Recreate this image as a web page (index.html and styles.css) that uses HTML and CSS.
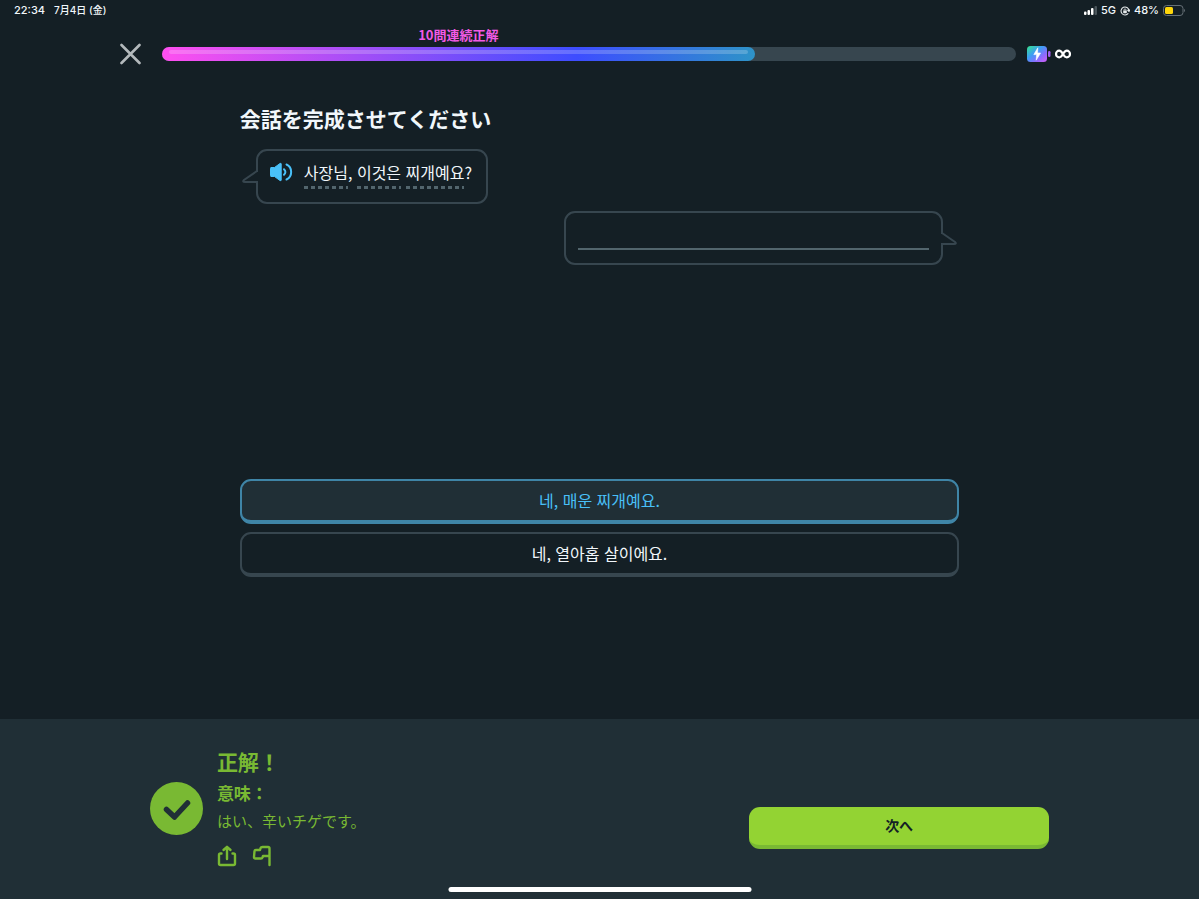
FILE: index.html
```html
<!DOCTYPE html>
<html lang="ja">
<head>
    <meta charset="UTF-8">
    <meta name="viewport" content="width=device-width, initial-scale=1.0">
    <title>会話を完成させてください</title>
    <link rel="stylesheet" href="styles.css">
</head>
<body>
    <div class="status-bar">
        <div class="status-left">
            <span>22:34</span>
            <span class="date">7月4日 (金)</span>
        </div>
        <div class="status-right">
            <svg width="13" height="9" viewBox="0 0 13 9">
                <rect x="0" y="5.500" width="2.500" height="3.500" rx="1" fill="#fff"/>
                <rect x="3.500" y="4" width="2.500" height="5" rx="1" fill="#fff"/>
                <rect x="7" y="2" width="2.500" height="7" rx="1" fill="#fff"/>
                <rect x="10.500" y="0" width="2.500" height="9" rx="1" fill="#4a555b"/>
            </svg>
            <span>5G</span>
            <svg width="10" height="10" viewBox="0 0 10 10" fill="none" stroke="#e6eaec">
                <path d="M8.300 7.300A4 4 0 1 1 9 4.400M7.400 4l1.600 1.300L10 3.600" stroke-width="1.100"/>
                <rect x="3.2" y="4.6" width="3.6" height="2.6" rx=".4" fill="#e6eaec" stroke="none"/>
                <path d="M4 4.800V3.900a1 1 0 0 1 2 0v.9" stroke-width=".8"/>
            </svg>
            <span>48%</span>
            <svg width="22" height="11" viewBox="0 0 22 11">
                <rect x=".5" y=".5" width="19.500" height="10" rx="3" fill="none" stroke="#667077"/>
                <rect x="2" y="2" width="8" height="7" rx="1.5" fill="#ffd60a"/>
                <path d="M21 4v3c1.200-.4 1.200-2.600 0-3z" fill="#667077"/>
            </svg>
        </div>
    </div>

    <header class="lesson-header">
        <button class="close" type="button" aria-label="閉じる">
            <svg width="22" height="22" viewBox="0 0 22 22">
                <path d="M1.500 2l18 18M19.500 2l-18 18" stroke="#b3b9bc" stroke-width="2.600" stroke-linecap="round"/>
            </svg>
        </button>
        <div class="progress">
            <div class="progress-fill">
                <span class="streak">10問連続正解</span>
            </div>
        </div>
        <div class="energy">
            <svg width="24" height="16" viewBox="0 0 24 16">
                <defs>
                    <linearGradient id="energy" x1="0" y1="0" x2="1" y2="1">
                        <stop offset="0" stop-color="#35e58a"/>
                        <stop offset=".4" stop-color="#3d9df5"/>
                        <stop offset=".7" stop-color="#8c6bff"/>
                        <stop offset="1" stop-color="#d45cf5"/>
                    </linearGradient>
                </defs>
                <rect x="0" y="0" width="20" height="16" rx="3.500" fill="url(#energy)"/>
                <rect x="21" y="5" width="2.500" height="6" rx="1.200" fill="#a45cf0"/>
                <path d="M10.800 1.800L6.800 8.600h2.800l-.4 5.600 4.400-7.200h-3z" fill="#fff" stroke="#fff" stroke-width=".6" stroke-linejoin="round"/>
            </svg>
            <svg width="16" height="10" viewBox="0 0 16 10">
                <path d="M8 5C6.600 2.600 5.600 1.700 4.200 1.700a3.200 3.300 0 0 0 0 6.600C5.600 8.300 6.600 7.400 8 5s2.400-3.300 3.800-3.300a3.200 3.300 0 0 1 0 6.600C10.400 8.300 9.400 7.400 8 5z" fill="none" stroke="#fff" stroke-width="2.200"/>
            </svg>
        </div>
    </header>

    <main class="lesson">
        <h1>会話を完成させてください</h1>

        <div class="bubble bubble-left">
            <svg class="tail" width="16" height="16" viewBox="0 0 16 16">
                <path d="M13 3h3v9h-3z" fill="#141f25"/>
                <path d="M15 2L2 11Q0 13 3 13H15" fill="#141f25" stroke="#37464f" stroke-width="2" stroke-linecap="round"/>
            </svg>
            <button class="speaker" type="button" aria-label="音声を再生">
                <svg width="23" height="20" viewBox="0 0 23 20">
                    <path d="M1 5.500H4.500l5.500-4Q11.200 .8 11.200 2v16q0 1.200-1.200.5L4.500 14.500H1Q.5 14.500 .5 13.500v-7q0-1 .5-1z" fill="#49c0f8" stroke="#49c0f8"/>
                    <path d="M14 7.300q2.800 2.700 0 5.400" fill="none" stroke="#49c0f8" stroke-width="2" stroke-linecap="round"/>
                    <path d="M16.500 2.500c6.200 2.800 6.200 12.200 0 15" fill="none" stroke="#49c0f8" stroke-width="2" stroke-linecap="round"/>
                </svg>
            </button>
            <p lang="ko"><span class="word">사장님</span>, <span class="word">이것은</span> <span class="word">찌개예요</span>?</p>
        </div>

        <div class="bubble bubble-right">
            <div class="blank"></div>
            <svg class="tail" width="16" height="16" viewBox="0 0 16 16">
                <path d="M0 3h3v9H0z" fill="#141f25"/>
                <path d="M1 2L14 11Q16 13 13 13H1" fill="#141f25" stroke="#37464f" stroke-width="2" stroke-linecap="round"/>
            </svg>
        </div>

        <div class="options" lang="ko">
            <button class="option selected" type="button">네, 매운 찌개예요.</button>
            <button class="option" type="button">네, 열아홉 살이에요.</button>
        </div>
    </main>

    <footer class="result">
        <div class="result-inner">
            <svg width="53" height="53" viewBox="0 0 53 53">
                <circle cx="26.500" cy="26.500" r="26.500" fill="#79b933"/>
                <path d="M16.500 27.500l8 7.500L37.500 21" fill="none" stroke="#202f36" stroke-width="5.500" stroke-linecap="round" stroke-linejoin="round"/>
            </svg>
            <div class="result-text">
                <h2>正解！</h2>
                <h3>意味：</h3>
                <p>はい、辛いチゲです。</p>
                <div class="actions">
                    <button type="button" aria-label="共有">
                        <svg width="20" height="22" viewBox="0 0 20 22">
                            <path d="M4.500 8.500H3.500Q2 8.500 2 10v8.500Q2 20 3.500 20h13q1.500 0 1.500-1.500V10Q18 8.500 16.500 8.500h-1M10 14V2.500M6.500 5L10 1.800l3.500 3.200" fill="none" stroke="#79b933" stroke-width="2.400" stroke-linecap="round" stroke-linejoin="round"/>
                        </svg>
                    </button>
                    <button type="button" aria-label="報告">
                        <svg width="20" height="22" viewBox="0 0 20 22">
                            <path d="M17.500 20V3.500Q17.500 2 16 2h-5.500Q9 2 8.600 3L8 5H4Q2.600 5 2.500 6.200L2 12Q2 13.500 3.500 13.500H9q1.200 0 1.500-1l.5-1.500h6.500" fill="none" stroke="#79b933" stroke-width="2.400" stroke-linecap="round" stroke-linejoin="round"/>
                        </svg>
                    </button>
                </div>
            </div>
            <button class="next" type="button">次へ</button>
        </div>
        <div class="home-indicator"></div>
    </footer>
</body>
</html>
```
FILE: styles.css
```css
* {
    box-sizing: border-box;
}
body {
    display: flex;
    flex-direction: column;
    min-height: 100vh;
    margin: 0;
    background-color: #141f25;
    color: #f1f7fb;
    font-family: "Noto Sans CJK JP", sans-serif;
}
h1, h2, h3, p {
    margin: 0;
}
button {
    padding: 0;
    border: none;
    background: none;
    color: inherit;
    font-family: inherit;
    cursor: pointer;
}
svg {
    display: block;
    flex-shrink: 0;
}
[lang="ko"] {
    font-family: "Noto Sans CJK KR", sans-serif;
}

/* Status bar */
.status-bar {
    display: flex;
    justify-content: space-between;
    height: 21px;
    padding: 0 14px;
    font-family: Inter, "Noto Sans CJK JP", sans-serif;
    font-size: 11px;
    font-weight: 500;
    line-height: 21px;
}
.status-left, .status-right {
    display: flex;
    align-items: center;
}
.status-left {
    gap: 9px;
}
.status-right {
    gap: 4px;
}
.date {
    font-size: 10px;
}

/* Header */
.lesson-header {
    display: flex;
    align-items: center;
    width: 80%;
    max-width: 960px;
    margin: 0 auto;
    padding: 22px 8px 0 0;
}
.close {
    margin-right: 20px;
}
.progress {
    flex: 1;
    height: 14px;
    border-radius: 7px;
    background-color: #37464f;
}
.progress-fill {
    position: relative;
    width: 69.4%;
    height: 14px;
    border-radius: 7px;
    background: linear-gradient(90deg, #ff4ff0, #3d4dff 70%, #2e93c8);
}
.progress-fill::after {
    content: "";
    position: absolute;
    top: 3px;
    left: 7px;
    right: 7px;
    height: 4px;
    border-radius: 2px;
    background-color: rgba(255, 255, 255, 0.2);
}
.streak {
    position: absolute;
    bottom: 18px;
    width: 100%;
    text-align: center;
    color: #f25ae6;
    font-size: 13px;
    font-weight: 700;
    line-height: 16px;
}
.energy {
    display: flex;
    align-items: center;
    gap: 4px;
    margin-left: 11px;
}

/* Lesson */
.lesson {
    flex: 1;
    display: flex;
    flex-direction: column;
    width: 60%;
    margin: 0 auto;
    padding: 38px 0 142px;
}
h1 {
    margin-bottom: 16px;
    font-size: 21px;
    font-weight: 700;
    line-height: 30px;
}
.bubble {
    position: relative;
    display: flex;
    align-items: center;
    border: 2px solid #37464f;
    border-radius: 11px;
}
.bubble-left {
    align-self: flex-start;
    height: 55px;
    margin-left: 16px;
    padding: 0 14px 0 12px;
}
.bubble-right {
    align-self: flex-end;
    width: 379px;
    height: 54px;
    margin: 7px 16px 0 0;
    padding: 0 12px;
}
.tail {
    position: absolute;
    top: 18px;
}
.bubble-left .tail {
    right: 100%;
}
.bubble-right .tail {
    left: 100%;
}
.bubble p {
    margin-bottom: 10px;
    font-size: 16px;
    line-height: 32px;
}
.speaker {
    margin: 0 11px 10px 0;
}
.word {
    padding-bottom: 5px;
    background: repeating-linear-gradient(90deg, #52656d 0 4px, transparent 4px 7px) left bottom / 100% 3px no-repeat;
}
.blank {
    flex: 1;
    height: 2px;
    margin-top: 22px;
    background-color: #52656d;
}
.options {
    display: flex;
    flex-direction: column;
    gap: 8px;
    margin-top: auto;
}
.option {
    height: 45px;
    padding-bottom: 2px;
    border: 2px solid #37464f;
    border-bottom-width: 4px;
    border-radius: 11px;
    font-size: 16px;
}
.option.selected {
    border-color: #3f85a7;
    background-color: #202f36;
    color: #49c0f8;
}

/* Result */
.result {
    position: relative;
    padding: 30px 0 32px;
    background-color: #202f36;
    color: #79b933;
}
.result-inner {
    display: flex;
    align-items: center;
    width: 75%;
    margin: 0 auto;
}
.result-text {
    flex: 1;
    margin-left: 14px;
}
h2 {
    margin-bottom: 4px;
    font-size: 21px;
    line-height: 24px;
}
h3 {
    font-size: 17px;
    line-height: 32px;
}
.result-text p {
    font-size: 15px;
    line-height: 24px;
}
.actions {
    display: flex;
    gap: 15px;
    margin-top: 12px;
}
.next {
    align-self: flex-end;
    width: 300px;
    height: 42px;
    margin-bottom: 18px;
    padding-bottom: 2px;
    border-bottom: 4px solid #79b933;
    border-radius: 11px;
    background-color: #93d333;
    color: #141f25;
    font-size: 14px;
    font-weight: 700;
}
.home-indicator {
    position: absolute;
    bottom: 7px;
    left: 50%;
    width: 303px;
    height: 5px;
    border-radius: 3px;
    background-color: #fff;
    transform: translateX(-50%);
}
```
